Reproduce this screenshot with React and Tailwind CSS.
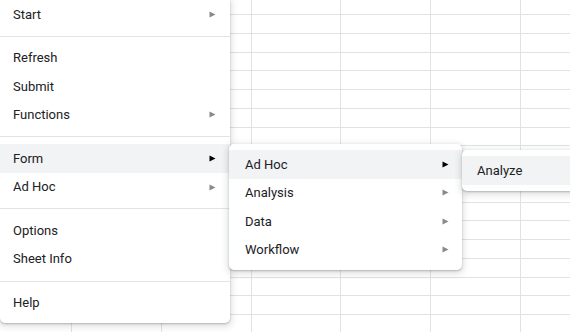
import React from "react";

const cols = [71, 89.8, 89.8, 89.8, 89.8, 89.8, 89.8];
const rows = Array.from({ length: 17 });

const Arrow = ({ active }) => (
  <svg width="7" height="7" viewBox="0 0 7 7" className="shrink-0">
    <polygon points="0.5,0.5 6.5,3.5 0.5,6.5" fill={active ? "#000000" : "#8a8a8a"} />
  </svg>
);

const Item = ({ label, sub, active, pad = "pl-[13px] pr-[14px]" }) => (
  <div
    className={`h-[28.57px] flex items-center justify-between ${pad} text-[13px] text-[#202124] ${
      active ? "bg-[#f1f3f4]" : ""
    }`}
  >
    <span>{label}</span>
    {sub && <Arrow active={active} />}
  </div>
);

const Sep = () => <div className="my-[7px] h-px bg-[#e3e3e3]" />;

const menuShadow =
  "shadow-[0_2px_6px_2px_rgba(60,64,67,0.15),0_1px_2px_rgba(60,64,67,0.3)]";

export default function App() {
  return (
    <div
      className="relative w-[570px] h-[332px] overflow-hidden bg-white"
      style={{ fontFamily: "Roboto, 'Liberation Sans', Arial, sans-serif" }}
    >
      {/* sheet grid */}
      <div className="flex flex-col">
        <div className="h-[14px] flex">
          {cols.map((w, i) => (
            <div
              key={i}
              className={`shrink-0 h-full ${i > 0 ? "border-l border-[#e2e2e2]" : ""}`}
              style={{ width: w }}
            />
          ))}
        </div>
        {rows.map((_, r) => (
          <div key={r} className="h-[18.75px] flex border-t border-[#e2e2e2] box-border">
            {cols.map((w, i) => (
              <div
                key={i}
                className={`shrink-0 h-full ${i > 0 ? "border-l border-[#e2e2e2]" : ""}`}
                style={{ width: w }}
              />
            ))}
          </div>
        ))}
      </div>

      {/* main menu */}
      <div className={`absolute left-0 top-0 w-[230px] bg-white rounded-b-[5px] pb-[6px] ${menuShadow}`}>
        <Item label="Start" sub />
        <Sep />
        <Item label="Refresh" />
        <Item label="Submit" />
        <Item label="Functions" sub />
        <Sep />
        <Item label="Form" sub active />
        <Item label="Ad Hoc" sub />
        <Sep />
        <Item label="Options" />
        <Item label="Sheet Info" />
        <Sep />
        <Item label="Help" />
      </div>

      {/* Form submenu */}
      <div className={`absolute left-[229px] top-[144px] w-[233px] bg-white rounded-[5px] py-[6px] ${menuShadow}`}>
        <Item label="Ad Hoc" sub active pad="pl-[16px] pr-[13px]" />
        <Item label="Analysis" sub pad="pl-[16px] pr-[13px]" />
        <Item label="Data" sub pad="pl-[16px] pr-[13px]" />
        <Item label="Workflow" sub pad="pl-[16px] pr-[13px]" />
      </div>

      {/* Ad Hoc submenu */}
      <div className={`absolute left-[462px] top-[150px] w-[140px] bg-white rounded-[5px] py-[6px] ${menuShadow}`}>
        <Item label="Analyze" active pad="pl-[15px] pr-[13px]" />
      </div>
    </div>
  );
}
